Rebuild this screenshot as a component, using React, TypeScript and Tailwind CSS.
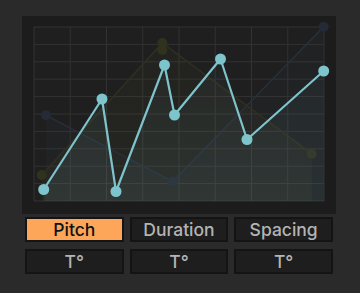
import React from "react";

// Chart coordinates are in panel space (panel starts at 22,16 on the page)
const OX = 22;
const OY = 16;

const MAIN = [
  [43.7, 189.5], [102, 99], [116, 191.5], [164.5, 65], [174.5, 115],
  [220.5, 59], [247, 139.5], [323.7, 71],
];
const OLIVE = [
  [41.7, 175], [162.3, 43], [311.7, 153.7],
];
const BLUE = [
  [46, 115.3], [172.7, 181.7], [323.7, 26.7],
];

const pts = (a: number[][]) => a.map(([x, y]) => `${x - OX},${y - OY}`).join(" ");
const area = (a: number[][], base: number) =>
  `${a[0][0] - OX},${base - OY} ` + pts(a) + ` ${a[a.length - 1][0] - OX},${base - OY}`;

function Chart() {
  const gx0 = 34, gx1 = 324, gy0 = 27, gy1 = 201;
  const cols = 8, rows = 10;
  const vx = Array.from({ length: cols + 1 }, (_, i) => gx0 + ((gx1 - gx0) * i) / cols);
  const hy = Array.from({ length: rows + 1 }, (_, j) => gy0 + ((gy1 - gy0) * j) / rows);
  return (
    <svg width={314} height={198} className="block">
      <defs>
        <linearGradient id="cy" x1="0" y1="0" x2="0" y2="1">
          <stop offset="0" stopColor="#7dc4cc" stopOpacity="0.03" />
          <stop offset="1" stopColor="#7dc4cc" stopOpacity="0.09" />
        </linearGradient>
        <linearGradient id="ol" x1="0" y1="0" x2="0" y2="1">
          <stop offset="0" stopColor="#8a8a3a" stopOpacity="0.03" />
          <stop offset="1" stopColor="#8a8a3a" stopOpacity="0.06" />
        </linearGradient>
      </defs>
      <rect x={gx0 - OX} y={gy0 - OY} width={gx1 - gx0} height={gy1 - gy0} fill="#1f1f1f" />
      {vx.map((x) => (
        <line key={"v" + x} x1={x - OX} x2={x - OX} y1={gy0 - OY} y2={gy1 - OY} stroke="#323232" strokeWidth={1} />
      ))}
      {hy.map((y) => (
        <line key={"h" + y} x1={gx0 - OX} x2={gx1 - OX} y1={y - OY} y2={y - OY} stroke="#323232" strokeWidth={1} />
      ))}

      <polygon points={area(OLIVE, gy1)} fill="url(#ol)" />
      <polygon points={area(BLUE, gy1)} fill="#4a6080" fillOpacity={0.05} />
      <polyline points={pts(OLIVE)} fill="none" stroke="#303020" strokeWidth={1.5} />
      <polyline points={pts(BLUE)} fill="none" stroke="#28303b" strokeWidth={1.5} />
      {OLIVE.map(([x, y], i) => (
        <circle key={"o" + i} cx={x - OX} cy={y - OY} r={5} fill="#30321e" />
      ))}
      <circle cx={162.3 - OX} cy={50 - OY} r={5} fill="#30321e" />
      {BLUE.map(([x, y], i) => (
        <circle key={"b" + i} cx={x - OX} cy={y - OY} r={5} fill="#252b36" />
      ))}

      <polygon points={area(MAIN, gy1)} fill="url(#cy)" />
      <polyline points={pts(MAIN)} fill="none" stroke="#7dc4cc" strokeWidth={2.2} strokeLinejoin="round" />
      {MAIN.map(([x, y], i) => (
        <circle key={"m" + i} cx={x - OX} cy={y - OY} r={5.5} fill="#7dc4cc" />
      ))}
    </svg>
  );
}

function Btn({ label, active }: { label: string; active?: boolean }) {
  return (
    <div
      className={
        "h-[25px] flex items-center justify-center border-2 border-[#141414] text-[17.5px] font-medium leading-none " +
        (active ? "bg-[#fda559] text-[#111111]" : "bg-[#1e1e1e] text-[#b4b4b4]")
      }
    >
      {label}
    </div>
  );
}

export default function App() {
  return (
    <div
      className="w-[360px] h-[293px] bg-[#2a2a2a] pt-4 pl-[22px] overflow-hidden"
      style={{ fontFamily: "Inter, 'Noto Sans', sans-serif" }}
    >
      <div className="w-[314px] h-[198px] bg-[#1c1c1c]">
        <Chart />
      </div>
      <div className="ml-[3px] mt-[3px] w-[308px] grid grid-cols-3 gap-x-[6px] gap-y-[7px]">
        <Btn label="Pitch" active />
        <Btn label="Duration" />
        <Btn label="Spacing" />
        <Btn label="T°" />
        <Btn label="T°" />
        <Btn label="T°" />
      </div>
    </div>
  );
}
